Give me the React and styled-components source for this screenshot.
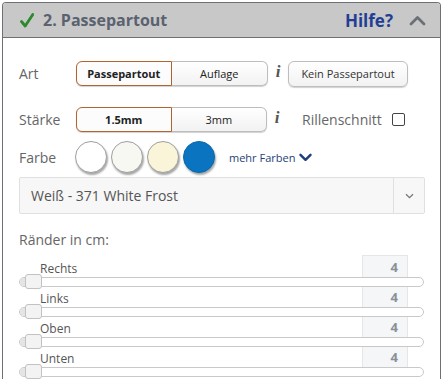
import React from "react";
import styled, { createGlobalStyle } from "styled-components";

const Global = createGlobalStyle`
  html, body { margin: 0; padding: 0; background: #fff; }
  body { font-family: "Open Sans", "DejaVu Sans", sans-serif; overflow: hidden; }
  * { box-sizing: border-box; }
`;

const Panel = styled.div`
  margin: 2px 0 0 2px;
  width: 439px;
  height: 400px;
  border: 1px solid #6d7176;
  border-bottom: none;
  border-radius: 4px 4px 0 0;
  overflow: hidden;
`;

const Header = styled.div`
  height: 35px;
  background: #c8c8c8;
  border-bottom: 1px solid #6d7176;
  display: flex;
  align-items: center;
  padding: 0 14px 0 17px;
`;

const Title = styled.div`
  font-weight: 700;
  font-size: 16px;
  color: #5a6270;
  margin-left: 9px;
  flex: 1;
`;

const Help = styled.div`
  font-weight: 700;
  font-size: 17px;
  color: #1f3f94;
  margin-right: 16px;
`;

const Body = styled.div`
  padding: 23px 0 0 16px;
`;

const Row = styled.div`
  display: flex;
  align-items: center;
  height: ${(p) => p.$h || 25}px;
  margin-top: ${(p) => p.$mt || 0}px;
`;

const Label = styled.div`
  font-size: 14px;
  color: #666;
  width: 57px;
  flex-shrink: 0;
`;

const Segmented = styled.div`
  display: flex;
  height: 25px;
  width: ${(p) => p.$w}px;
`;

const Seg = styled.div`
  flex: ${(p) => p.$grow};
  display: flex;
  align-items: center;
  justify-content: center;
  font-size: 11px;
  color: #222;
  font-weight: ${(p) => (p.$active ? 700 : 400)};
  border: 1px solid ${(p) => (p.$active ? "#b2642c" : "#bdbdbd")};
  background: ${(p) => (p.$active ? "#fcfcfc" : "linear-gradient(#ffffff, #f2f2f2)")};
  box-shadow: 0 1px 1px rgba(0, 0, 0, 0.18);
  &:first-child { border-radius: 6px 0 0 6px; }
  &:last-child { border-radius: 0 6px 6px 0; border-left: none; }
`;

const Info = styled.span`
  font-family: "Liberation Serif", "DejaVu Serif", serif;
  font-weight: 700;
  font-style: italic;
  font-size: 17px;
  color: #555;
  width: 20px;
  text-align: center;
  flex-shrink: 0;
  line-height: 1;
  margin-top: -4px;
`;

const Button = styled.div`
  height: 26px;
  width: 120px;
  display: flex;
  align-items: center;
  justify-content: center;
  font-size: 11px;
  color: #333;
  border: 1px solid #bdbdbd;
  border-radius: 6px;
  background: linear-gradient(#ffffff, #f2f2f2);
  box-shadow: 0 1px 1px rgba(0, 0, 0, 0.18);
`;

const CheckLabel = styled.span`
  font-size: 14px;
  color: #666;
  margin-left: 15px;
`;

const Checkbox = styled.span`
  width: 13px;
  height: 13px;
  border: 1px solid #444;
  border-radius: 2px;
  margin-left: 10px;
  background: #fff;
`;

const Swatches = styled.div`
  display: flex;
  gap: 4px;
  margin-left: -1px;
`;

const Swatch = styled.div`
  width: 32px;
  height: 32px;
  border-radius: 50%;
  background: ${(p) => p.$c};
  border: 1.5px solid ${(p) => p.$b || "#a0a0a0"};
  box-shadow: 1px 2px 2px rgba(0, 0, 0, 0.35);
`;

const More = styled.div`
  display: flex;
  align-items: center;
  gap: 4px;
  margin-left: 14px;
  font-size: 11px;
  color: #24427a;
`;

const Select = styled.div`
  margin-top: 4px;
  width: 406px;
  height: 37px;
  border: 1px solid #e0e0e0;
  background: #f7f7f7;
  border-radius: 2px;
  display: flex;
  align-items: center;
  font-size: 14px;
  color: #555;
`;

const SelectText = styled.div`
  flex: 1;
  padding-left: 11px;
`;

const SelectArrow = styled.div`
  width: 31px;
  height: 100%;
  border-left: 1px solid #e0e0e0;
  display: flex;
  align-items: center;
  justify-content: center;
`;

const Section = styled.div`
  margin-top: 16px;
  font-size: 14px;
  color: #666;
  line-height: 20px;
`;

const Sliders = styled.div`
  margin-top: 7px;
  width: 405px;
`;

const SliderRow = styled.div`
  height: 30px;
  display: flex;
  flex-direction: column;
`;

const SliderTop = styled.div`
  height: 20px;
  display: flex;
  align-items: flex-end;
  justify-content: space-between;
`;

const SliderLabel = styled.div`
  font-size: 12px;
  color: #555;
  padding-left: 21px;
  line-height: 16px;
`;

const NumBox = styled.div`
  width: 46px;
  height: 23px;
  margin-right: 16px;
  margin-bottom: -1px;
  background: #f5f6f8;
  border: 1px solid #e4e6ea;
  border-bottom: none;
  display: flex;
  align-items: center;
  justify-content: flex-end;
  padding-right: 9px;
  font-size: 13px;
  font-weight: 700;
  color: #8a8f98;
`;

const Track = styled.div`
  position: relative;
  height: 10px;
  border: 1px solid #c9c9c9;
  border-radius: 5px;
  background: #fff;
  &::before {
    content: "";
    position: absolute;
    left: 0;
    top: 0;
    bottom: 0;
    width: 6px;
    background: #e4e4e4;
    border-radius: 4px 0 0 4px;
  }
`;

const Handle = styled.div`
  position: absolute;
  left: 5px;
  top: -4px;
  width: 17px;
  height: 15px;
  border: 1px solid #c2c2c2;
  border-radius: 3px;
  background: #f3f3f3;
`;

const sliders = ["Rechts", "Links", "Oben", "Unten"];

export default function App() {
  return (
    <>
      <Global />
      <Panel>
        <Header>
          <svg width="14" height="15" viewBox="0 0 14 15">
            <path d="M1.5 8.5 L5.2 13 L12.8 1.5" fill="none" stroke="#2b8a2e" strokeWidth="2.8" strokeLinecap="round" strokeLinejoin="round" />
          </svg>
          <Title>2. Passepartout</Title>
          <Help>Hilfe?</Help>
          <svg width="17" height="11" viewBox="0 0 17 11">
            <path d="M2 9 L8.5 2.5 L15 9" fill="none" stroke="#6b7077" strokeWidth="2.8" strokeLinecap="round" strokeLinejoin="round" />
          </svg>
        </Header>
        <Body>
          <Row>
            <Label>Art</Label>
            <Segmented $w={192}>
              <Seg $grow={95} $active>Passepartout</Seg>
              <Seg $grow={97}>Auflage</Seg>
            </Segmented>
            <Info>i</Info>
            <Button>Kein Passepartout</Button>
          </Row>
          <Row $mt={21}>
            <Label>Stärke</Label>
            <Segmented $w={191}>
              <Seg $grow={95} $active>1.5mm</Seg>
              <Seg $grow={96}>3mm</Seg>
            </Segmented>
            <Info>i</Info>
            <CheckLabel>Rillenschnitt</CheckLabel>
            <Checkbox />
          </Row>
          <Row $mt={9} $h={32}>
            <Label>Farbe</Label>
            <Swatches>
              <Swatch $c="#ffffff" />
              <Swatch $c="#f8f8f3" />
              <Swatch $c="#faf4d8" />
              <Swatch $c="#0a74c0" $b="#0a6ab0" />
            </Swatches>
            <More>
              mehr Farben
              <svg width="13" height="9" viewBox="0 0 13 9">
                <path d="M1.5 1.8 L6.5 6.8 L11.5 1.8" fill="none" stroke="#1f3f7a" strokeWidth="2.4" strokeLinecap="round" strokeLinejoin="round" />
              </svg>
            </More>
          </Row>
          <Select>
            <SelectText>Weiß - 371 White Frost</SelectText>
            <SelectArrow>
              <svg width="9" height="6" viewBox="0 0 9 6">
                <path d="M1 1.2 L4.5 4.6 L8 1.2" fill="none" stroke="#777" strokeWidth="1.3" />
              </svg>
            </SelectArrow>
          </Select>
          <Section>Ränder in cm:</Section>
          <Sliders>
            {sliders.map((s) => (
              <SliderRow key={s}>
                <SliderTop>
                  <SliderLabel>{s}</SliderLabel>
                  <NumBox>4</NumBox>
                </SliderTop>
                <Track>
                  <Handle />
                </Track>
              </SliderRow>
            ))}
          </Sliders>
        </Body>
      </Panel>
    </>
  );
}
